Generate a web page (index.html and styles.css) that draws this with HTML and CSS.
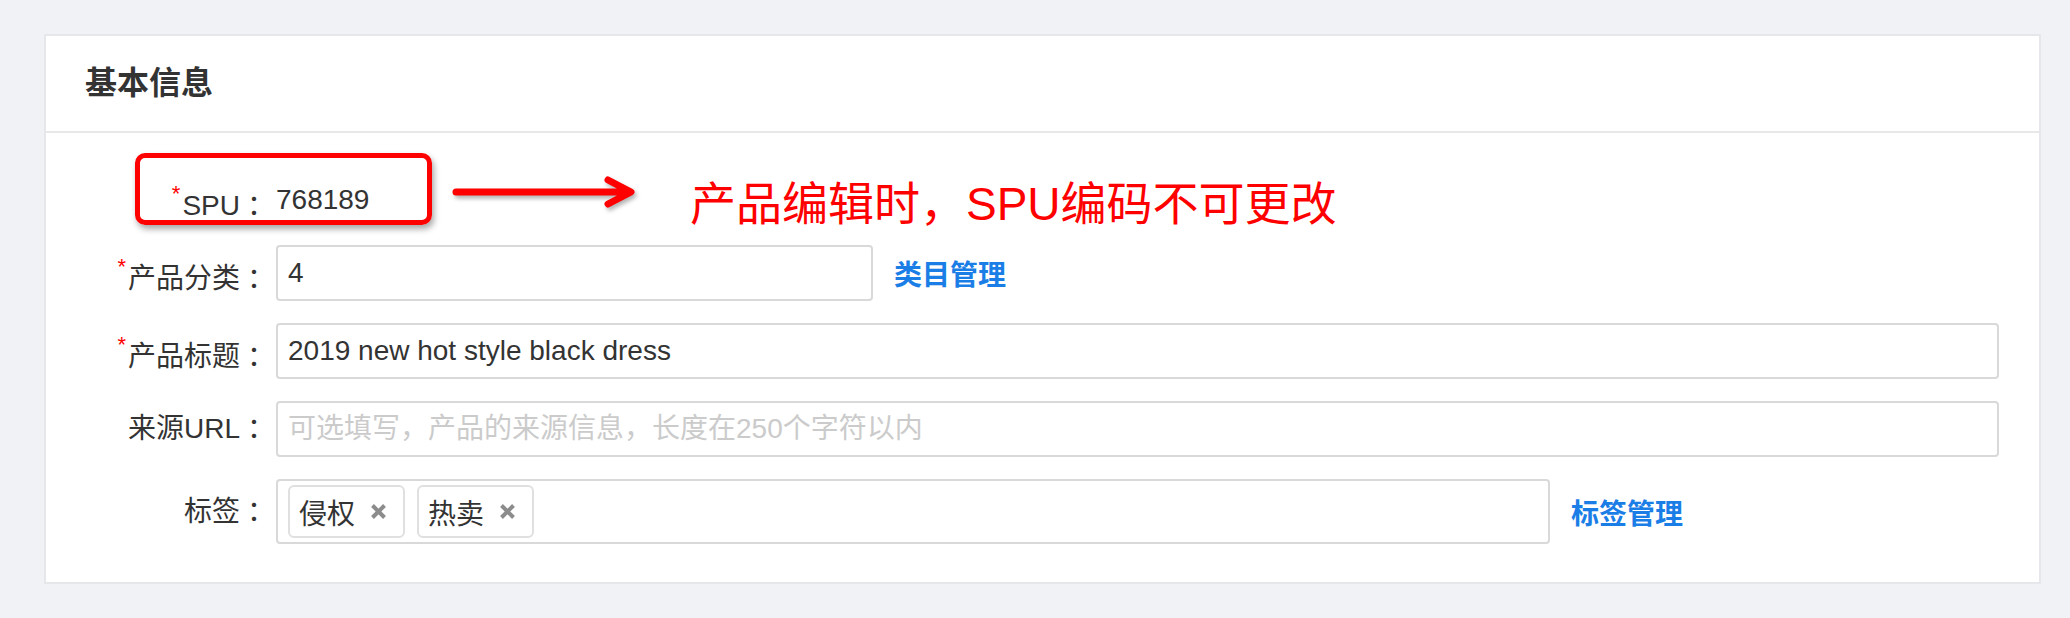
FILE: index.html
```html
<!DOCTYPE html>
<html lang="zh-CN">
<head>
    <meta charset="UTF-8">
    <meta name="viewport" content="width=device-width, initial-scale=1.0">
    <title>基本信息</title>
    <link rel="stylesheet" href="styles.css">
</head>
<body>
    <div class="page">
        <div class="card">
            <div class="card-header">基本信息</div>
            <div class="card-body">
                <div class="form-row spu-row">
                    <label class="form-label required">SPU<span class="colon">：</span></label>
                    <div class="form-value">768189</div>
                </div>
                <div class="form-row">
                    <label class="form-label required" for="category">产品分类<span class="colon">：</span></label>
                    <input class="form-input input-short" type="text" id="category" value="4">
                    <a class="form-link" href="#">类目管理</a>
                </div>
                <div class="form-row">
                    <label class="form-label required" for="title">产品标题<span class="colon">：</span></label>
                    <input class="form-input" type="text" id="title" value="2019 new hot style black dress">
                </div>
                <div class="form-row">
                    <label class="form-label" for="source">来源URL<span class="colon">：</span></label>
                    <input class="form-input" type="text" id="source" placeholder="可选填写，产品的来源信息，长度在250个字符以内">
                </div>
                <div class="form-row">
                    <label class="form-label">标签<span class="colon">：</span></label>
                    <div class="tag-input">
                        <span class="tag">侵权<svg class="tag-close" width="17" height="17" viewBox="0 0 17 17"><path d="M2.5 2.5 L14.5 14.5 M14.5 2.5 L2.5 14.5"/></svg></span>
                        <span class="tag">热卖<svg class="tag-close" width="17" height="17" viewBox="0 0 17 17"><path d="M2.5 2.5 L14.5 14.5 M14.5 2.5 L2.5 14.5"/></svg></span>
                    </div>
                    <a class="form-link" href="#">标签管理</a>
                </div>
            </div>

            <!-- 标注：SPU 不可修改 -->
            <div class="note-box"></div>
            <svg class="note-arrow" width="190" height="34" viewBox="0 0 190 34">
                <path d="M5 17 L178 17 M157 5 L180 17 L157 29"/>
            </svg>
            <div class="note-text">产品编辑时，SPU编码不可更改</div>
        </div>
    </div>
</body>
</html>
```

FILE: styles.css
```css
body {
    margin: 0;
    background-color: #f0f2f5;
    font-family: "Liberation Sans", "Noto Sans CJK SC", sans-serif;
    color: #333;
}
.page {
    padding: 34px 29px 34px 44px;
}
.card {
    position: relative;
    background-color: #fff;
    border: 2px solid #e6e7ea;
}
.card-header {
    height: 95px;
    line-height: 95px;
    padding-left: 39px;
    font-size: 32px;
    font-weight: bold;
    color: #333;
    border-bottom: 2px solid #e8e8e8;
}
.card-body {
    padding: 39px 40px 38px 0;
}
.form-row {
    display: flex;
    align-items: center;
    height: 56px;
    margin-bottom: 22px;
}
.form-row:last-child {
    height: 65px;
    margin-bottom: 0;
}
.spu-row {
    margin-bottom: 17px;
}
.form-label {
    flex: none;
    width: 222px;
    margin-right: 8px;
    text-align: right;
    font-size: 28px;
    line-height: 56px;
    white-space: nowrap;
}
.colon {
    margin-left: 7px; /* 冒号往右挪一点 */
    margin-right: -7px;
}
.required::before {
    content: "*";
    color: #f00;
    font-size: 22px;
    margin-right: 2px;
    vertical-align: 14px;
}
.form-value {
    font-size: 28px;
}
.form-input {
    flex: 1;
    height: 56px;
    box-sizing: border-box;
    padding: 0 10px;
    border: 2px solid #d9d9d9;
    border-radius: 4px;
    font-family: inherit;
    font-size: 28px;
    color: #333;
    outline: none;
}
.form-input::placeholder {
    color: #cbcbcb;
}
.input-short {
    flex: none;
    width: 597px;
}
.form-link {
    margin-left: 21px;
    font-size: 28px;
    font-weight: bold;
    color: #1a7ee6;
    text-decoration: none;
}
.tag-input {
    display: flex;
    align-items: center;
    gap: 12px;
    width: 1274px;
    height: 65px;
    box-sizing: border-box;
    padding: 0 10px;
    border: 2px solid #d9d9d9;
    border-radius: 4px;
}
.tag {
    display: inline-flex;
    align-items: center;
    gap: 15px;
    height: 53px;
    box-sizing: border-box;
    padding: 0 16px 0 9px;
    border: 2px solid #e0e0e0;
    border-radius: 6px;
    font-size: 28px;
}
.tag-close path {
    stroke: #8c8c8c;
    stroke-width: 4;
    fill: none;
}

/* 标注层 */
.note-box {
    position: absolute;
    left: 89px;
    top: 117px;
    width: 297px;
    height: 72px;
    box-sizing: border-box;
    border: 5px solid #f00;
    border-radius: 10px;
    box-shadow: 2px 4px 6px rgba(0, 0, 0, 0.35);
}
.note-arrow {
    position: absolute;
    left: 405px;
    top: 139px;
    filter: drop-shadow(2px 3px 2px rgba(0, 0, 0, 0.3));
}
.note-arrow path {
    stroke: #f00;
    stroke-width: 7;
    stroke-linecap: round;
    stroke-linejoin: round;
    fill: none;
}
.note-text {
    position: absolute;
    left: 644px;
    top: 140px;
    font-size: 46px;
    line-height: 56px;
    color: #f00;
    white-space: nowrap;
}
```
